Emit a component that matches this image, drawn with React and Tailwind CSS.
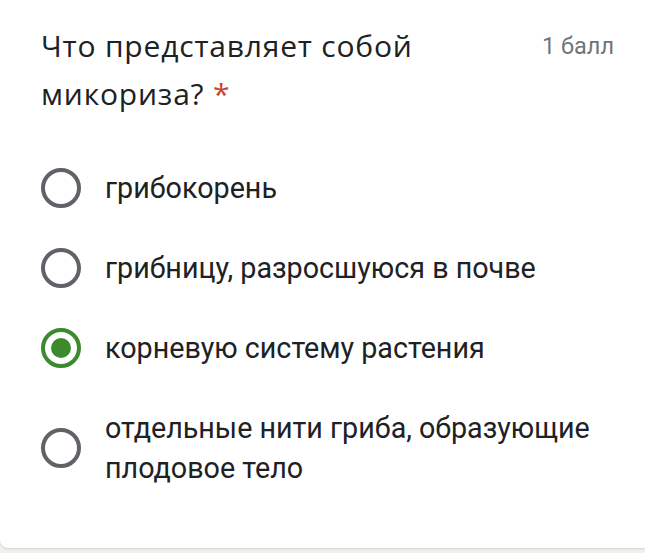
import React from 'react';

const options = [
  { label: 'грибокорень', checked: false },
  { label: 'грибницу, разросшуюся в почве', checked: false },
  { label: 'корневую систему растения', checked: true },
  { label: 'отдельные нити гриба, образующие плодовое тело', checked: false },
];

const Radio = ({ checked }) => (
  <span
    className={
      'flex h-10 w-10 shrink-0 items-center justify-center rounded-full border-4 ' +
      (checked ? 'border-[#3c8a2e]' : 'border-[#5f6368]')
    }
  >
    {checked && <span className="h-5 w-5 rounded-full bg-[#3c8a2e]"></span>}
  </span>
);

export default function App() {
  return (
    <div className="h-[553px] w-[645px] bg-[#eef1ec] font-['Roboto',sans-serif]">
      <div className="h-[548px] w-full rounded-bl-lg bg-white shadow-[0_1px_2px_rgba(0,0,0,0.12)]">
        <div className="flex items-start justify-between pl-[41px] pr-[31px] pt-[22px]">
          <h2 className="w-[440px] font-['Open_Sans',sans-serif] text-[30px] leading-[48px] tracking-[0.8px] text-[#202124]">
            Что представляет собой микориза? <span className="text-[#c9432b]">*</span>
          </h2>
          <span className="pt-[6px] text-[23.5px] leading-[36px] text-[#70757a]">1 балл</span>
        </div>

        <div className="mt-[50px] flex flex-col gap-[40px] pl-[41px] pr-[30px]">
          {options.map((o) => (
            <div key={o.label} className="flex items-center gap-[24px]">
              <Radio checked={o.checked} />
              <span className="text-[28.7px] leading-[40px] text-[#202124]">{o.label}</span>
            </div>
          ))}
        </div>
      </div>
    </div>
  );
}
